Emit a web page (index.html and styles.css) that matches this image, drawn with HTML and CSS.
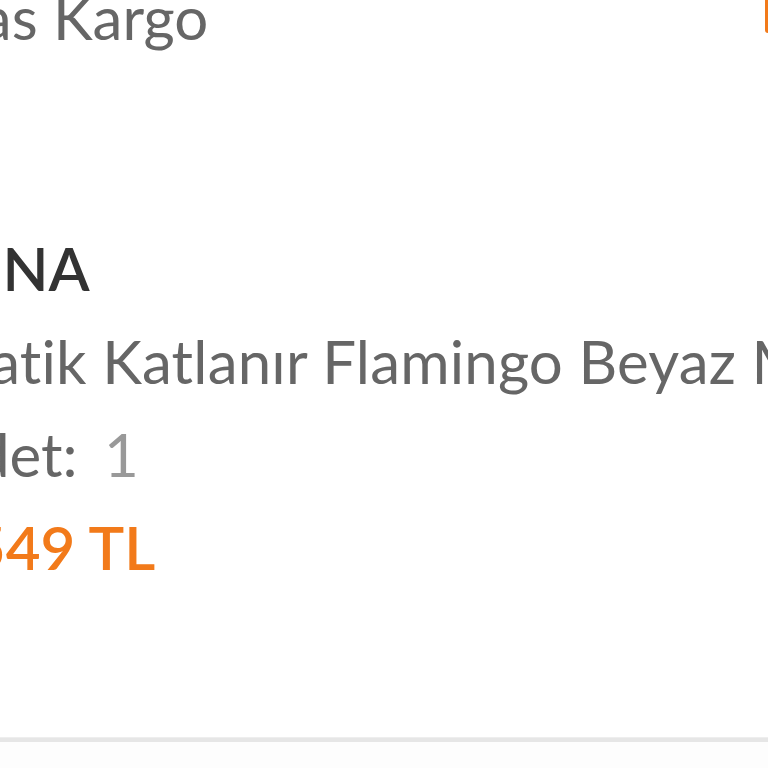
FILE: index.html
```html
<!DOCTYPE html>
<html lang="tr">
<head>
  <meta charset="utf-8">
  <meta name="viewport" content="width=device-width, initial-scale=1">
  <title>Sipariş Detayı</title>
  <link rel="stylesheet" href="styles.css">
</head>
<body>
  <div class="page">
    <div class="cargo-row">
      <div class="cargo-name">Aras Kargo</div>
      <div class="track-btn">Kargo Takip</div>
    </div>

    <div class="product">
      <div class="brand">MINA</div>
      <div class="product-name">Pratik Katlanır Flamingo Beyaz Masa Lambası</div>
      <div class="qty"><span class="qty-label">Adet:</span> <span class="qty-value">1</span></div>
      <div class="price">1.549 TL</div>
    </div>

    <div class="divider"></div>
    <div class="after"></div>
  </div>
</body>
</html>
```

FILE: styles.css
```css
* {
  box-sizing: border-box;
}

html, body {
  margin: 0;
  padding: 0;
  background: #fff;
  overflow: hidden;
}

body {
  font-family: Lato, 'Noto Sans', sans-serif;
  font-size: 60px;
  line-height: 93px;
  color: #666;
  width: 768px;
  height: 768px;
}

.cargo-row {
  display: flex;
  justify-content: space-between;
  align-items: flex-start;
  margin-top: -29px;
  height: 93px;
}

.cargo-name {
  white-space: nowrap;
  margin-left: -80px;
}

.track-btn {
  flex-shrink: 0;
  width: 260px;
  height: 62px;
  margin-right: -257px;
  border: 3px solid #f27a1a;
  border-radius: 3px;
  color: #f27a1a;
  font-size: 30px;
  line-height: 56px;
  text-align: center;
}

.product {
  padding-top: 158px;
  padding-bottom: 143px;
}

.product > div {
  white-space: nowrap;
}

.brand {
  margin-left: -71px;
  font-weight: 600;
  color: #333;
}

.product-name {
  margin-left: -67px;
  letter-spacing: 0.18px;
}

.qty {
  margin-left: -64px;
}

.qty-value {
  color: #999;
  margin-left: 11px;
}

.price {
  margin-left: -78px;
  font-weight: 600;
  color: #f27a1a;
}

.divider {
  height: 5px;
  background: #e6e6e6;
  border-top: 1px solid #eee;
}

.after {
  height: 40px;
  background: #fdfdfd;
}
```
